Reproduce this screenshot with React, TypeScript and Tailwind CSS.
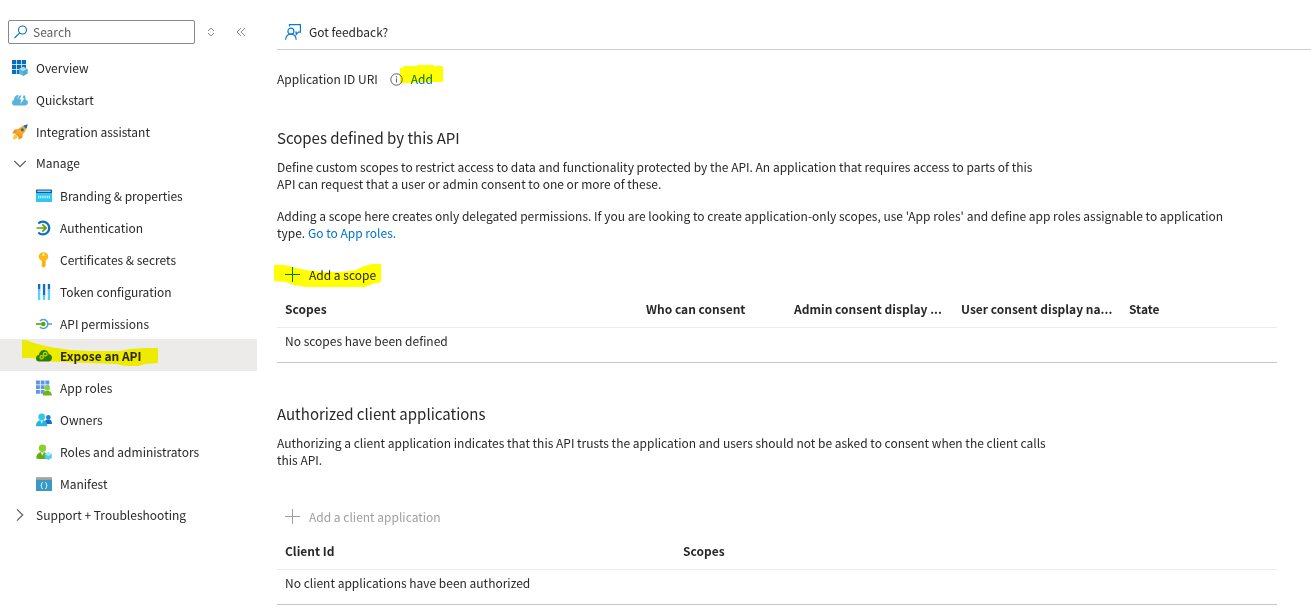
import React from "react";

type IconProps = { className?: string };

const OverviewIcon = () => (
  <svg width="16" height="16" viewBox="0 0 16 16">
    <g fill="#0a6cbf">
      <path d="M0 0h4.200v4.200H0zM4.900 0h4.200v4.200H4.900zM9.800 0H14v4.200H9.800zM0 4.900h4.200v4.200H0zM4.900 4.900h4.200v4.200H4.900zM0 9.800h4.200V14H0z" />
      <path d="M9.800 4.900H14v4.200H9.800zM4.900 9.800h4.200V14H4.900z" />
    </g>
    <path d="M11.200 6.800l4.300 2.200v4.500l-4.300 2.400-4.300-2.400V9z" fill="#59b4d9" />
    <path d="M11.200 6.800l4.300 2.200-4.300 2.300L6.900 9z" fill="#a5dcef" />
    <path d="M11.200 11.300v4.600l4.300-2.400V9z" fill="#4fa9d0" />
  </svg>
);

const QuickstartIcon = () => (
  <svg width="16" height="16" viewBox="0 0 16 16">
    <path d="M3 13.600A2.900 2.900 0 0 1 .1 10.700c0-1.500.9-2.600 2-2.900C2.200 5 3.600 3.200 5.600 3c1 0 1.800.3 2.400 1 .8-1 1.800-1.500 2.900-1.300 1.600.2 2.600 1.500 2.700 3.300 0 .5 0 1-.2 1.500 1.500.3 2.500 1.500 2.500 3 0 1.800-1.300 3.100-3.100 3.100z" fill="#59b4d9" />
    <path d="M9.700 2.600 7.600 7.600h1.900L8.200 12l4.300-5.700h-2.100l1.800-3.700z" fill="#fff" />
    <path d="M6.900 3 5.700 6.500" stroke="#fff" strokeWidth=".7" />
  </svg>
);

const RocketIcon = () => (
  <svg width="16" height="16" viewBox="0 0 16 16">
    <path d="M6.500 5.300 2.600 5.600.2 9.300l4 .5zM10.700 9.500l-.3 3.900-3.700 2.400-.5-4z" fill="#f78d1e" />
    <path d="M3.600 9.200C4.800 5.600 8.600 1.700 15.600.4c-1.200 6.900-5 10.800-8.600 12z" fill="#fba91c" />
    <path d="M11.200 1.900C12.500 1.100 14 .6 15.600.4c-.2 1.600-.7 3-1.400 4.300z" fill="#1170c4" />
    <circle cx="10.300" cy="5.800" r="1.500" fill="#1170c4" />
    <path d="M3.300 10.200c-1.900.9-2.200 3.300-2.500 5.500 2.100-.5 4.500-.9 5.200-2.900z" fill="#ffc83d" />
    <path d="M4 9.600 6.600 12.200" stroke="#e8590c" strokeWidth="1" />
  </svg>
);

const BrandingIcon = () => (
  <svg width="16" height="16" viewBox="0 0 16 16">
    <path d="M0 4h16v9.400a.6.6 0 0 1-.6.6H.6a.6.6 0 0 1-.6-.6z" fill="#32c8ee" />
    <path d="M.600 1.500h14.800a.6.6 0 0 1 .6.6V5H0V2.100a.6.6 0 0 1 .6-.6z" fill="#0f5ea8" />
    <path d="M1.300 2.700h13.400v1H1.300z" fill="#e6f3fb" />
    <path d="M2 9h12" stroke="#a9ebfa" strokeWidth="2.400" strokeDasharray="1.300 .5" />
  </svg>
);

const AuthIcon = () => (
  <svg width="16" height="16" viewBox="0 0 16 16" fill="none">
    <path d="M2.300 3.500A6.400 6.400 0 1 1 2.300 12.500" stroke="#0f6fc8" strokeWidth="2.300" />
    <path d="M.600 8H10M6.300 4.300 10.100 8l-3.800 3.700" stroke="#5ea30d" strokeWidth="1.700" />
  </svg>
);

const KeyIcon = () => (
  <svg width="16" height="16" viewBox="0 0 16 16">
    <path d="M7.500.2c2.700 0 4.800 1.900 4.800 4.400 0 1.700-1 3.200-2.600 4v5.200L7.500 16l-2.100-2.100v-1l1-.9-1-1 1-.9-1-1v-.5c-1.700-.8-2.700-2.300-2.700-4C2.700 2.100 4.800.2 7.500.2z" fill="#fdb913" />
    <circle cx="7.500" cy="2.800" r="1.200" fill="#fff2cc" />
    <path d="M7.900 9v5" stroke="#e89a00" strokeWidth=".8" />
  </svg>
);

const TokenIcon = () => (
  <svg width="16" height="16" viewBox="0 0 16 16">
    <path d="M2 0h2.300v5H2zM6.900 0h2.300v11.500H6.900zM11.800 0h2.300v5h-2.300z" fill="#0f6fc8" />
    <path d="M2 6h2.300v10H2zM6.900 13h2.300v3H6.900zM11.800 6h2.300v10h-2.300z" fill="#50d9f5" />
    <path d="M2 5h2.300v2.500H2zM6.900 11.500h2.300V13H6.900zM11.800 5h2.300v2.500h-2.300z" fill="#83b9f0" />
  </svg>
);

const ApiPermIcon = () => (
  <svg width="16" height="16" viewBox="0 0 16 16" fill="none">
    <path d="M4 5A4.500 4.500 0 1 1 4 11" stroke="#4a9fd8" strokeWidth="1.500" />
    <path d="M0 8h5.500" stroke="#5ea30d" strokeWidth="1.700" />
    <path d="M12 8h4" stroke="#4a9fd8" strokeWidth="1.500" />
    <circle cx="7.300" cy="8" r="2.300" fill="#5ea30d" />
  </svg>
);

const ExposeIcon = () => (
  <svg width="16" height="16" viewBox="0 0 16 16">
    <path d="M3.500 13.500A3.300 3.300 0 0 1 0 10.200c0-1.700 1.200-3 2.900-3.200C3.300 4.300 5.300 2 8 2c2.400 0 4.300 1.600 4.900 4.200 1.900.1 3.100 1.700 3.100 3.600 0 2.100-1.600 3.700-3.600 3.700z" fill="#2c7d0c" />
    <g stroke="#b7d957" fill="none" strokeWidth="1.300">
      <circle cx="5.600" cy="9.300" r="1.600" />
      <circle cx="9.200" cy="6.200" r="1.800" />
      <path d="M6.800 8.200l1-.8" />
    </g>
  </svg>
);

const AppRolesIcon = () => (
  <svg width="16" height="16" viewBox="0 0 16 16">
    <path d="M0 .5h3.900v3.900H0zM4.700.5h3.900v3.900H4.700zM9.400.5h3.900v3.900H9.400zM0 5.200h3.900v3.900H0zM4.700 5.200h3.900v3.900H4.700zM0 9.900h3.900v3.900H0zM4.700 9.900h3.900v3.900H4.700zM9.400 5.200h3.900v3.900H9.400z" fill="#5f97e8" />
    <path d="M6.800 15.500c0-3 1.600-4.700 4.400-4.700s4.600 1.700 4.600 4.700z" fill="#6bb617" />
    <circle cx="11.300" cy="8.100" r="2.700" fill="#8bd12c" />
  </svg>
);

const OwnersIcon = () => (
  <svg width="16" height="16" viewBox="0 0 16 16">
    <path d="M8.500 12c0-3 1.200-4.700 3.700-4.700S16 9 16 12z" fill="#0f6fd0" />
    <circle cx="12.300" cy="5.200" r="2.300" fill="#1a80dc" />
    <path d="M0 14.300C0 10.300 2 8 5.600 8s5.700 2.300 5.700 6.300z" fill="#28b4dc" />
    <path d="M4.200 8.200h2.900l-1.400 3.600z" fill="#e6f8fd" />
    <circle cx="5.700" cy="4.900" r="3.300" fill="#32c5ea" />
  </svg>
);

const RolesIcon = () => (
  <svg width="16" height="16" viewBox="0 0 16 16">
    <path d="M.300 14.500C.3 10.300 2.600 8 6.400 8s6 2.300 6 6.500c-4 .8-8 .8-12.100 0z" fill="#64ac12" />
    <path d="M4.700 8.200h3.400l-1.700 3.600z" fill="#e6f5cf" />
    <circle cx="6.500" cy="4.200" r="3.700" fill="#8ccf2e" />
    <path d="M12.300 8.200l3.500 1.900v3.900l-3.500 2-3.500-2v-3.900z" fill="#52cdea" />
    <path d="M12.300 8.200l3.500 1.900-3.500 2-3.500-2z" fill="#a4ecfa" />
  </svg>
);

const ManifestIcon = () => (
  <svg width="16" height="16" viewBox="0 0 16 16">
    <path d="M0 1.200h16v3H0z" fill="#9fa3a6" />
    <path d="M0 4h16v11H0z" fill="#3999c6" />
    <path d="M6.800 6.600c-1.200 0-1.200.5-1.200 1.400s0 1.400-.8 1.600c.8.200.8.700.8 1.600s0 1.400 1.200 1.400M9.200 6.600c1.200 0 1.200.5 1.200 1.400s0 1.400.8 1.600c-.8.200-.8.700-.8 1.600s0 1.400-1.200 1.400" stroke="#fff" strokeWidth="1" fill="none" />
  </svg>
);

const PlusIcon = ({ className }: IconProps) => (
  <svg width="16" height="16" viewBox="0 0 16 16" className={className} fill="none" stroke="currentColor">
    <path d="M7.500 0v15M0 7.500h15" />
  </svg>
);

const FeedbackIcon = () => (
  <svg width="16" height="16" viewBox="0 0 16 16" fill="none" stroke="#0f78d4" strokeWidth="1.200">
    <path d="M4.500 2.500V.6h10.900v7.600h-1.900l-2.300 2.300V8.200h-.9" />
    <circle cx="5.900" cy="7.200" r="3" />
    <path d="M.600 15.700c.3-3.300 2.300-5.500 5.300-5.500s5 2.100 5.300 5.500" />
  </svg>
);

const InfoIcon = () => (
  <svg width="13" height="13" viewBox="0 0 13 13" fill="none" stroke="#605e5c">
    <circle cx="6.500" cy="6.500" r="5.700" />
    <path d="M6.500 5.500v4M6.500 3.200v1.200" />
  </svg>
);

type NavItem = { label: string; icon: React.ReactNode; selected?: boolean };

const topItems: NavItem[] = [
  { label: "Overview", icon: <OverviewIcon /> },
  { label: "Quickstart", icon: <QuickstartIcon /> },
  { label: "Integration assistant", icon: <RocketIcon /> },
];

const manageItems: NavItem[] = [
  { label: "Branding & properties", icon: <BrandingIcon /> },
  { label: "Authentication", icon: <AuthIcon /> },
  { label: "Certificates & secrets", icon: <KeyIcon /> },
  { label: "Token configuration", icon: <TokenIcon /> },
  { label: "API permissions", icon: <ApiPermIcon /> },
  { label: "Expose an API", icon: <ExposeIcon />, selected: true },
  { label: "App roles", icon: <AppRolesIcon /> },
  { label: "Owners", icon: <OwnersIcon /> },
  { label: "Roles and administrators", icon: <RolesIcon /> },
  { label: "Manifest", icon: <ManifestIcon /> },
];

const Label = ({ children }: { children: React.ReactNode }) => (
  <span className="pb-0.5">{children}</span>
);

const NavLink = ({ item, nested }: { item: NavItem; nested?: boolean }) => (
  <li>
    <a
      href="#"
      aria-current={item.selected ? "page" : undefined}
      className={`relative flex h-8 items-center gap-2 ${nested ? "pl-9 pt-0.5" : "pl-3"} ${
        item.selected ? "bg-[#edebe9] font-semibold" : ""
      }`}
    >
      {item.icon}
      <Label>{item.label}</Label>
      {item.selected && (
        <svg className="pointer-events-none absolute left-[22px] top-0 mix-blend-multiply" width="137" height="29" viewBox="0 0 137 29" fill="#ffff00">
          <path d="M0 1h4l8 3 16 4 20 3 20 1h30l10-2 14-1h14v15l-12 1-8 2h-12l-10-2-28-1-28-1-14-1-8-2-6-1H0z" />
        </svg>
      )}
    </a>
  </li>
);

const Chevron = ({ open }: { open?: boolean }) => (
  <svg width="16" height="16" viewBox="0 0 16 16" fill="none" stroke="#605e5c" strokeWidth="1.200">
    <path d={open ? "M2.300 5 8 10.700 13.700 5" : "M5 2.300 10.700 8 5 13.700"} />
  </svg>
);

const headCell = "h-[37px] border-b border-[#edebe9] px-2 pb-0.5 text-left font-semibold whitespace-nowrap";
const bodyCell = "h-[35px] border-b border-[#c8c6c4] px-2 pb-2.5";

export default function App() {
  return (
    <div className="flex bg-white font-['Noto_Sans_CJK_SC','Open_Sans',sans-serif] text-[12px] leading-[17px] text-[#292827]">
      <aside className="w-[257px] shrink-0 pt-5">
        <div className="flex h-6 items-center pl-2">
          <label className="flex h-6 w-[187px] items-center gap-1 rounded-[2px] border border-[#8a8886] pl-1">
            <svg width="16" height="16" viewBox="0 0 16 16" className="shrink-0" fill="none" stroke="#0f6cbd" strokeWidth="1.100">
              <circle cx="9.500" cy="6" r="4" />
              <path d="M6.700 8.900 1.500 14" />
            </svg>
            <input type="text" aria-label="Search" placeholder="Search" className="h-full w-full min-w-0 pb-0.5 outline-none placeholder:text-[#605e5c]" />
          </label>
          <button aria-label="Expand or collapse all" className="ml-3 flex w-2">
            <svg width="8" height="10" viewBox="0 0 8 10" fill="none" stroke="#8a8886">
              <path d="M1 4 4 1l3 3M1 6l3 3 3-3" />
            </svg>
          </button>
          <button aria-label="Collapse menu" className="ml-[21px] flex">
            <svg width="10" height="10" viewBox="0 0 10 10" fill="none" stroke="#8a8886">
              <path d="M5 1 1 5l4 4M9 1 5 5l4 4" />
            </svg>
          </button>
        </div>
        <nav className="pt-2">
          <ul>
            {topItems.map((item) => (
              <NavLink key={item.label} item={item} />
            ))}
            <li>
              <button className="flex h-[31px] w-full items-center gap-2 pl-3">
                <Chevron open />
                <Label>Manage</Label>
              </button>
              <ul>
                {manageItems.map((item) => (
                  <NavLink key={item.label} item={item} nested />
                ))}
              </ul>
            </li>
            <li>
              <button className="flex h-8 w-full items-center gap-2 pl-3">
                <Chevron />
                <Label>Support + Troubleshooting</Label>
              </button>
            </li>
          </ul>
        </nav>
      </aside>

      <main className="min-w-0 flex-1 pl-5">
        <div className="flex h-[50px] items-center border-b border-[#d2d0ce] pl-2 pt-3.5">
          <button className="flex items-center gap-2">
            <FeedbackIcon />
            <span>Got feedback?</span>
          </button>
        </div>

        <div className="pr-[34px]">
          <div className="mt-5 flex h-[18px] items-center">
            <Label>Application ID URI</Label>
            <span className="ml-3">
              <InfoIcon />
            </span>
            <a href="#" className="relative ml-2 pb-0.5 text-[#0072c9]">
              Add
              <svg className="pointer-events-none absolute -left-[11px] -top-[5px] mix-blend-multiply" width="43" height="19" viewBox="0 0 43 19" fill="#ffff00">
                <path d="M0 3h3V1h14V0h17v1h9v16H22l-12 1H0z" />
              </svg>
            </a>
          </div>

          <section className="mt-[39px]">
            <h2 className="text-[15px] leading-[22px]">Scopes defined by this API</h2>
            <p className="mt-[9px] max-w-[770px]">
              Define custom scopes to restrict access to data and functionality protected by the API. An application that requires access to parts of this API can request that a user or admin consent to one or more of these.
            </p>
            <p className="mt-[15px] max-w-[960px]">
              Adding a scope here creates only delegated permissions. If you are looking to create application-only scopes, use 'App roles' and define app roles assignable to application type.{" "}
              <a href="#" className="text-[#0072c9]">Go to App roles.</a>
            </p>
            <button className="relative mt-[19px] flex h-[30px] items-center gap-2 pl-2">
              <PlusIcon className="text-[#0078d4]" />
              <Label>Add a scope</Label>
              <svg className="pointer-events-none absolute -left-[3px] top-[4px] mix-blend-multiply" width="107" height="24" viewBox="0 0 107 24" fill="#ffff00">
                <path d="M0 1h10l8 2 14 3 18 2h18l14-2 8-4 8-2h9v18l-8 2-8 3H32l-12-2-8-3-12-1z" />
              </svg>
            </button>
            <table className="mt-px w-full table-fixed border-separate border-spacing-0">
              <thead>
                <tr>
                  <th className={`${headCell} w-[36.1%]`}>Scopes</th>
                  <th className={`${headCell} w-[14.8%]`}>Who can consent</th>
                  <th className={`${headCell} w-[16.7%]`}>Admin consent display ...</th>
                  <th className={`${headCell} w-[16.8%]`}>User consent display na...</th>
                  <th className={headCell}>State</th>
                </tr>
              </thead>
              <tbody>
                <tr>
                  <td colSpan={5} className={bodyCell}>No scopes have been defined</td>
                </tr>
              </tbody>
            </table>
          </section>

          <section className="mt-10">
            <h2 className="text-[15px] leading-[22px]">Authorized client applications</h2>
            <p className="mt-[9px] max-w-[770px]">
              Authorizing a client application indicates that this API trusts the application and users should not be asked to consent when the client calls this API.
            </p>
            <button disabled className="mt-[34px] flex h-[30px] items-center gap-2 pl-2 text-[#a19f9d]">
              <PlusIcon />
              <Label>Add a client application</Label>
            </button>
            <table className="mt-px w-full table-fixed border-separate border-spacing-0">
              <thead>
                <tr>
                  <th className={`${headCell} w-[39.8%]`}>Client Id</th>
                  <th className={headCell}>Scopes</th>
                </tr>
              </thead>
              <tbody>
                <tr>
                  <td colSpan={2} className={bodyCell}>No client applications have been authorized</td>
                </tr>
              </tbody>
            </table>
          </section>
        </div>
      </main>
    </div>
  );
}
